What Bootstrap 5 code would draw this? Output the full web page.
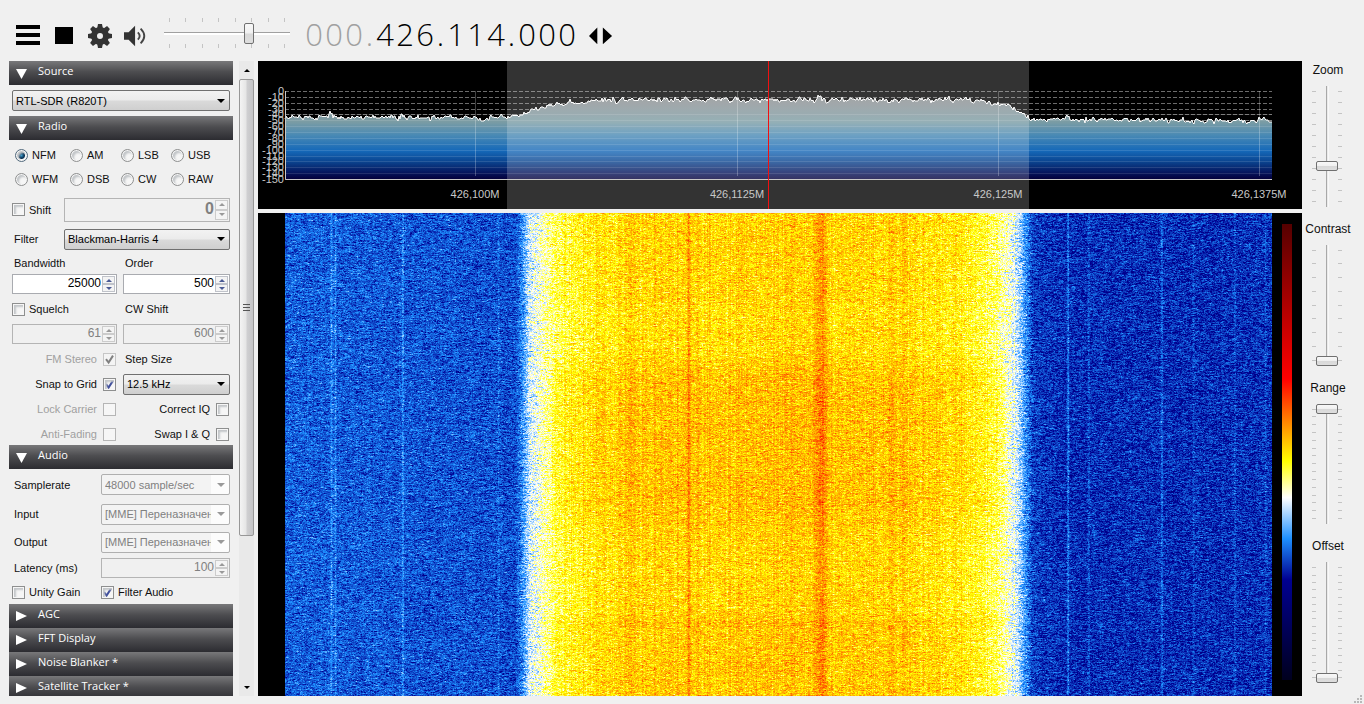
<!DOCTYPE html>
<html lang="en">
<head>
  <meta charset="UTF-8" />
  <meta name="viewport" content="width=device-width, initial-scale=1.0" />
  <title>SDR Receiver</title>
  <link href="https://cdn.jsdelivr.net/npm/bootstrap@5.3.0/dist/css/bootstrap.min.css" rel="stylesheet">
  <style>
    body {
      height: 100vh;
      background: #f0f0f0;
      color: #111;
      font: 11px/16px "Liberation Sans", Arial, sans-serif;
      overflow: hidden;
    }

    /* toolbar */
    .toolbar {
      height: 61px;
      padding: 10px 16px 0;
      flex: none;
    }

    .tools { display: flex; gap: 12px; padding-top: 14px; margin-right: 16px; }
    .tools .tool:first-child svg, .tools .tool:nth-child(2) svg { margin-top: 1px; }

    .tool {
      width: 24px;
      height: 24px;
      padding: 0;
      border: 0;
      background: none;
      line-height: 0;
      display: flex;
    }

    .freq {
      margin-left: 14px;
      font: 300 31px/40px "Open Sans", "Noto Sans", sans-serif;
      color: #000;
    }

    .freq span { display: inline-block; width: 20px; text-align: center; }
    .freq .dot { width: 11px; }
    .freq .off { color: #a0a0a0; }

    /* side panel */
    .work { padding: 0 0 8px 9px; min-height: 0; }
    .side { width: 224px; flex: none; overflow: hidden; }

    .panel-head {
      display: flex;
      align-items: center;
      width: 100%;
      height: 24px;
      flex: none;
      padding: 0 7px 4px;
      border: 0;
      background: linear-gradient(#78787a, #4d4d50 45%, #2c2c31);
      color: #fff;
      font: 11px/16px "Open Sans", "Noto Sans", sans-serif;
      text-align: left;
    }

    .panel-head svg { margin: 4px 11px 0 0; }
    .panel-body { padding: 0 3px; flex: none; }
    .line { display: flex; align-items: center; }
    .h20 { height: 20px; }
    .h22 { height: 22px; }
    .h24 { height: 24px; }
    .h28 { height: 28px; }
    .h31 { height: 31px; }
    .pair { display: grid; grid-template-columns: 105px 1fr; gap: 6px; align-items: center; }
    .modes { display: grid; grid-template-columns: 55px 51px 50px 1fr; padding: 3px 0 3px 3px; }
    .cap { padding-left: 2px; }
    .cap-s { width: 52px; flex: none; }
    .cap-l { width: 89px; flex: none; }
    .box-r { justify-content: end; gap: 6px; padding-right: 1px; }
    .dim { color: #a0a0a0; }

    .form-check-input {
      width: 13px;
      height: 13px;
      margin: 0;
      flex: none;
      border: 1px solid #8e8f8f;
      background-color: #f6f6f6;
      box-shadow: inset 0 0 0 1px #f6f6f6, inset 2px 2px 2px 1px #c3c6c9;
    }

    .form-check-input[type=checkbox] { border-radius: 0; }
    .form-check-input:checked { border-color: #8e8f8f; background-color: #f6f6f6; }

    .form-check-input:checked[type=checkbox] {
      background-image: url("data:image/svg+xml,%3Csvg xmlns='http://www.w3.org/2000/svg' viewBox='0 0 11 11'%3E%3Cpath d='M2 5.2 4.6 8.6 9 1.6' fill='none' stroke='%23404f9c' stroke-width='2'/%3E%3C/svg%3E");
    }

    .form-check-input:checked[type=radio] {
      background-image: radial-gradient(circle, #3c9ac8 0, #12486f 2px, #0c3050 3px, transparent 4px);
      border-color: #51697c;
    }

    .form-check-input:disabled {
      opacity: 1;
      border-color: #b5b5b5;
      box-shadow: none;
      filter: grayscale(1);
    }

    .form-check-input:disabled:checked { background-size: 11px; opacity: .7; }

    .form-select {
      height: 21px;
      padding: 0 18px 0 3px;
      border: 1px solid #707070;
      border-radius: 2px;
      color: #000;
      font: 11px/16px "Liberation Sans", Arial, sans-serif;
      background: url("data:image/svg+xml,%3Csvg xmlns='http://www.w3.org/2000/svg' width='8' height='4'%3E%3Cpath d='M0 0h8L4 4z'/%3E%3C/svg%3E") no-repeat right 4px center / 8px 4px, linear-gradient(#f2f2f2, #ebebeb 48%, #dadada 52%, #cfcfcf);
    }

    .form-select:disabled {
      border-color: #afafaf;
      color: #808080;
      opacity: 1;
      background: url("data:image/svg+xml,%3Csvg xmlns='http://www.w3.org/2000/svg' width='8' height='4'%3E%3Cpath fill='%23999' d='M0 0h8L4 4z'/%3E%3C/svg%3E") no-repeat right 4px center / 8px 4px, linear-gradient(to left, #fcfcfc 18px, #f3f3f3 18px);
    }

    .spin {
      display: flex;
      flex: 1;
      height: 20px;
      border: 1px solid #a9abb0;
      background: #fff;
    }

    .spin.tall { height: 24px; }
    .spin.idle { background: #f0f0f0; border-color: #b4b4b4; }

    .spin input {
      flex: 1;
      width: 0;
      min-width: 0;
      padding: 0 1px 2px;
      border: 0;
      background: none;
      color: #000;
      font: 12px/16px "Liberation Sans", Arial, sans-serif;
      text-align: right;
    }

    .spin input:disabled { color: #808080; }
    .spin.tall input { font-size: 16px; font-weight: 700; }
    .steps { width: 14px; display: flex; flex-direction: column; padding: 1px 1px 1px 0; }

    .steps button {
      flex: 1;
      padding: 0;
      border: 1px solid #c0c3ca;
      background: #f4f4f4;
      line-height: 0;
      color: #4a5a94;
      display: flex;
      align-items: center;
      justify-content: center;
    }

    .idle .steps button { color: #999; border-color: #ccc; }

    /* scrollbar */
    .scroller { width: 15px; margin: 0 4px 0 6px; flex: none; background: #e9e9e9; }
    .scroller button { height: 18px; padding: 0; border: 0; background: none; line-height: 0; }

    .handle {
      height: 72%;
      border: 1px solid #979797;
      border-radius: 2px;
      background: linear-gradient(to right, #f4f4f4, #e6e6e6 45%, #cfcfd1 55%, #c4c4c6);
      display: flex;
      align-items: center;
      justify-content: center;
    }

    /* displays */
    .spectrum { height: 148px; flex: none; background: #000; }
    .spectrum svg { display: block; width: 100%; height: 148px; }
    .spectrum text { font: 11px "Liberation Sans", Arial, sans-serif; fill: #c8c8c8; }
    .fall { padding: 0 10px 0 27px; background: #000; min-height: 0; }
    .fall-view { min-width: 0; min-height: 0; overflow: hidden; }
    .fall canvas { display: block; }

    .legend {
      width: 10px;
      margin: 11px 0 16px 10px;
      background: linear-gradient(#550000, #ff0000 34%, #ffff00 52%, #ffffff 60%, #1e90ff 69%, #000091 78%, #00001e);
    }

    /* sliders */
    .sliders { width: 62px; flex: none; padding-right: 12px; font-size: 12px; }
    .sliders label { margin-top: 1px; padding-left: 2px; }
    .vert { display: flex; justify-content: center; margin: 8px 0 13px; min-height: 0; }

    .ticks { display: flex; justify-content: space-between; }
    .ticks i { background: #c4c4c4; }
    .vert .ticks { flex-direction: column; padding: 5px 0; }
    .vert .ticks i { width: 4px; height: 1px; }
    .horz .ticks { padding: 0 5px; }
    .horz .ticks i { width: 1px; height: 4px; }

    input[type=range] { appearance: none; -webkit-appearance: none; margin: 0; padding: 0; }
    .vert input { writing-mode: vertical-lr; direction: rtl; width: 22px; height: 100%; background: linear-gradient(to right, transparent 10px, #a8a8a8 10px, #a8a8a8 11px, #e4e4e4 11px, #fff 13px, transparent 13px); }
    .horz input { display: block; width: 126px; height: 22px; background: linear-gradient(transparent 10px, #a0a0a0 10px, #a0a0a0 11px, #fff 11px, #fff 13px, transparent 13px); }

    input[type=range]::-webkit-slider-thumb {
      -webkit-appearance: none;
      border: 1px solid #707070;
      border-radius: 2px;
      background: linear-gradient(#f8f8f8, #f0f0f0 48%, #d8d8d8 52%, #dedede);
    }

    .vert input::-webkit-slider-thumb { width: 22px; height: 10px; }
    .horz input::-webkit-slider-thumb { width: 10px; height: 21px; }

    .grip { position: absolute; right: 2px; bottom: 1px; }
  </style>
</head>
<body class="d-flex flex-column">
  <header class="toolbar d-flex align-items-start">
    <div class="tools">
      <button class="tool" aria-label="Menu"><svg width="24" height="20"><path d="M0 0h24v4H0zM0 8h24v4H0zM0 16h24v4H0z"/></svg></button>
      <button class="tool" aria-label="Stop"><svg width="24" height="20"><path d="M3 2h18v17H3z"/></svg></button>
      <button class="tool" aria-label="Settings"><svg width="24" height="24" viewBox="0 0 24 24" id="gear"></svg></button>
      <button class="tool" aria-label="Mute"><svg width="26" height="24" viewBox="0 0 26 24"><path fill="#333" d="M0 8h5l7-7v22l-7-7H0z"/><path d="M15 8q4 4 0 8M18 4q8 8 0 16" fill="none" stroke="#444" stroke-width="2"/></svg></button>
    </div>
    <div class="horz pt-2" data-ticks="8">
      <input type="range" aria-label="Volume" value="69">
    </div>
    <div class="freq pt-1" id="freq" aria-label="Frequency"></div>
    <div class="d-flex pt-3 ms-2 ps-1">
      <button class="tool" aria-label="Tuning style"><svg width="26" height="18" viewBox="0 -1 26 18"><path d="M0 9 9 0v18zM15 0l10 9-10 9z"/></svg></button>
    </div>
  </header>

  <main class="work d-flex flex-fill">
    <aside class="side d-flex flex-column" id="side">
      <button class="panel-head open">Source</button>
      <div class="panel-body">
        <div class="line h31"><select class="form-select" aria-label="Source"><option>RTL-SDR (R820T)</option></select></div>
      </div>

      <button class="panel-head open">Radio</button>
      <div class="panel-body">
        <div class="modes" id="modes"></div>
        <div class="line h31">
          <label class="line gap-1 cap-s"><input class="form-check-input" type="checkbox">Shift</label>
          <div class="spin tall idle"><input aria-label="Shift" value="0" disabled></div>
        </div>
        <div class="line h28">
          <label class="cap cap-s" for="filter">Filter</label>
          <select class="form-select" id="filter"><option>Blackman-Harris 4</option></select>
        </div>
        <div class="pair h20">
          <label class="cap" for="bw">Bandwidth</label>
          <label class="cap" for="order">Order</label>
        </div>
        <div class="pair h22">
          <div class="spin"><input id="bw" value="25000"></div>
          <div class="spin"><input id="order" value="500"></div>
        </div>
        <div class="pair h28">
          <label class="line gap-1"><input class="form-check-input" type="checkbox">Squelch</label>
          <label class="cap" for="cw">CW Shift</label>
        </div>
        <div class="pair h22">
          <div class="spin idle"><input aria-label="Squelch" value="61" disabled></div>
          <div class="spin idle"><input id="cw" value="600" disabled></div>
        </div>
        <div class="pair h28">
          <label class="line box-r dim">FM Stereo<input class="form-check-input" type="checkbox" checked disabled></label>
          <label class="cap" for="step">Step Size</label>
        </div>
        <div class="pair h22">
          <label class="line box-r">Snap to Grid<input class="form-check-input" type="checkbox" checked></label>
          <select class="form-select" id="step"><option>12.5 kHz</option></select>
        </div>
        <div class="pair h28">
          <label class="line box-r dim">Lock Carrier<input class="form-check-input" type="checkbox" disabled></label>
          <label class="line box-r">Correct IQ<input class="form-check-input" type="checkbox"></label>
        </div>
        <div class="pair h22">
          <label class="line box-r dim">Anti-Fading<input class="form-check-input" type="checkbox" disabled></label>
          <label class="line box-r">Swap I &amp; Q<input class="form-check-input" type="checkbox"></label>
        </div>
      </div>

      <button class="panel-head open">Audio</button>
      <div class="panel-body">
        <div class="line h31">
          <label class="cap cap-l" for="rate">Samplerate</label>
          <select class="form-select" id="rate" disabled><option>48000 sample/sec</option></select>
        </div>
        <div class="line h28">
          <label class="cap cap-l" for="ain">Input</label>
          <select class="form-select" id="ain" disabled><option>[MME] Переназначение</option></select>
        </div>
        <div class="line h28">
          <label class="cap cap-l" for="aout">Output</label>
          <select class="form-select" id="aout" disabled><option>[MME] Переназначение</option></select>
        </div>
        <div class="line h24">
          <label class="cap cap-l" for="lat">Latency (ms)</label>
          <div class="spin idle"><input id="lat" value="100" disabled></div>
        </div>
        <div class="line h24">
          <label class="line gap-1 cap-l"><input class="form-check-input" type="checkbox">Unity Gain</label>
          <label class="line gap-1"><input class="form-check-input" type="checkbox" checked>Filter Audio</label>
        </div>
      </div>

      <button class="panel-head">AGC</button>
      <button class="panel-head">FFT Display</button>
      <button class="panel-head">Noise Blanker *</button>
      <button class="panel-head">Satellite Tracker *</button>
    </aside>

    <div class="scroller d-flex flex-column">
      <button aria-label="Scroll up"><svg width="6" height="3"><path d="M0 3h6L3 0z"/></svg></button>
      <div class="handle"><svg width="7" height="8"><path d="M0 0h7v1H0zM0 3h7v1H0zM0 6h7v1H0z" fill="#555"/></svg></div>
      <button class="mt-auto" aria-label="Scroll down"><svg width="6" height="3"><path d="M0 0h6L3 3z"/></svg></button>
    </div>

    <section class="d-flex flex-column flex-fill gap-1" style="min-width: 0">
      <div class="spectrum"><svg id="spectrum"></svg></div>
      <div class="fall d-flex flex-fill">
        <div class="fall-view flex-fill" id="fallView"><canvas id="fall"></canvas></div>
        <div class="legend"></div>
      </div>
    </section>

    <div class="sliders d-flex flex-column text-center" id="sliders"></div>
  </main>

  <svg class="grip" width="8" height="8" fill="#b8b8b8"><path d="M6 0h2v2H6zM3 3h2v2H3zM6 3h2v2H6zM0 6h2v2H0zM3 6h2v2H3zM6 6h2v2H6z"/></svg>

  <script src="https://cdn.jsdelivr.net/npm/bootstrap@5.3.0/dist/js/bootstrap.bundle.min.js"></script>
  <script>
    // small seeded generator so the noise is the same on every redraw
    let seed = 7;
    function rnd() {
      seed = (seed * 1664525 + 1013904223) >>> 0;
      return seed / 4294967296;
    }
    function gauss() {
      return rnd() + rnd() + rnd() + rnd() - 2;
    }

    // piecewise linear lookup in [[x, y], ...]
    function lerp(points, x) {
      for (let i = 1; i < points.length; i++) {
        const [x0, y0] = points[i - 1], [x1, y1] = points[i];
        if (x <= x1) return y0 + (y1 - y0) * (x - x0) / (x1 - x0);
      }
      return points[points.length - 1][1];
    }

    // toolbar
    let teeth = "";
    for (let a = 0; a < 360; a += 45) teeth += `<path d="M9 5 10 0h4l1 5z" transform="rotate(${a} 12 12)"/>`;
    document.getElementById("gear").innerHTML = `<g fill="#333">${teeth}<circle cx="12" cy="12" r="6" fill="none" stroke="#333" stroke-width="6"/></g>`;

    document.getElementById("freq").innerHTML = "000.426.114.000".split("").map((c, i) =>
      `<span class="${c === "." ? "dot" : ""} ${i < 4 ? "off" : ""}">${c}</span>`).join("");

    // side panel
    document.querySelectorAll(".panel-head").forEach(head => {
      const d = head.classList.contains("open") ? "M0 1h11L5.500 11z" : "M0 0v10l11-5z";
      head.insertAdjacentHTML("afterbegin", `<svg width="11" height="11"><path fill="#fff" d="${d}"/></svg>`);
    });

    document.getElementById("modes").innerHTML = ["NFM", "AM", "LSB", "USB", "WFM", "DSB", "CW", "RAW"].map((m, i) =>
      `<label class="line gap-1 h24"><input class="form-check-input" type="radio" name="mode"${i ? "" : " checked"}>${m}</label>`).join("");

    document.querySelectorAll(".spin").forEach(spin => {
      const off = spin.classList.contains("idle") ? "disabled" : "";
      spin.insertAdjacentHTML("beforeend", `<div class="steps">
        <button ${off} aria-label="Up"><svg width="6" height="3"><path fill="currentColor" d="M0 3h6L3 0z"/></svg></button>
        <button ${off} aria-label="Down"><svg width="6" height="3"><path fill="currentColor" d="M0 0h6L3 3z"/></svg></button>
      </div>`);
    });

    // sliders with their tick rows
    const ticks = n => `<div class="ticks">${"<i></i>".repeat(n)}</div>`;
    const horz = document.querySelector(".horz");
    horz.insertAdjacentHTML("afterbegin", ticks(8));
    horz.insertAdjacentHTML("beforeend", ticks(8));

    document.getElementById("sliders").innerHTML = [
      ["Zoom", 11, 32], ["Contrast", 9, 0], ["Range", 15, 100], ["Offset", 16, 0]
    ].map(([name, n, value]) => `<div class="d-flex flex-column" style="flex: 1; min-height: 0">
        <label for="s${name}">${name}</label>
        <div class="vert flex-fill">${ticks(n)}<input type="range" id="s${name}" value="${value}">${ticks(n)}</div>
      </div>`).join("");

    // all x below are fractions of the visible span
    const PASS = [0.225, 0.754];
    const floorLine = [[0, 117], [0.15, 118], [0.23, 118], [0.238, 116], [0.25, 110], [0.27, 106], [0.3, 102], [0.33, 100],
      [0.5, 100], [0.7, 100], [0.715, 103], [0.735, 106], [0.75, 114], [0.756, 119], [1, 121]];
    const spurs = [[0.046, 4], [0.119, 4], [0.218, 3], [0.542, 4], [0.793, 3]];

    function drawSpectrum() {
      const svg = document.getElementById("spectrum");
      const w = svg.clientWidth, left = 27, right = w - 30, top = 30, bottom = 118;
      const span = right - left;
      const px = f => Math.round(left + f * span);
      seed = 7;

      let line = "", drift = 0;
      for (let x = left; x <= right; x++) {
        const f = (x - left) / span;
        drift = drift * 0.4 + gauss() * 2.2;
        let y = lerp(floorLine, f) - 61 + drift;
        spurs.forEach(([c, a]) => { if (Math.abs(f - c) < 0.002) y -= a; });
        line += `${x},${Math.round(y)} `;
      }

      let grid = "", over = "", labels = "";
      for (let i = 0; i <= 15; i++) {
        const y = Math.round(top + (bottom - top) * i / 15);
        grid += `<path d="M${left} ${y}.5H${right}" stroke="#6c6c6c" stroke-dasharray="4 2"/>`;
        if (i > 3) over += `<path d="M${left} ${y}.5H${right}" stroke="#fff" stroke-opacity=".12"/>`;
        labels += `<text x="${left - 1}" y="${y + 4}" text-anchor="end">${-10 * i}</text>`;
      }
      [[0.193, "426,100M"], [0.458, "426,1125M"], [0.722, "426,125M"], [0.987, "426,1375M"]].forEach(([f, t]) => {
        over += `<path d="M${px(f)}.5 ${top}V${bottom - 3}" stroke="#fff" stroke-opacity=".25"/>`;
        labels += `<text x="${px(f)}" y="137" text-anchor="middle">${t}</text>`;
      });

      svg.innerHTML = `
        <defs><linearGradient id="glow" gradientUnits="userSpaceOnUse" x1="0" x2="0" y1="${top}" y2="${bottom}">
          <stop offset="0" stop-color="#8c8c8c"/><stop offset=".15" stop-color="#8a9296"/>
          <stop offset=".35" stop-color="#7b9ca4"/><stop offset=".5" stop-color="#4a8ab4"/>
          <stop offset=".68" stop-color="#1568b8"/><stop offset=".8" stop-color="#0b4590"/>
          <stop offset=".92" stop-color="#061860"/><stop offset="1" stop-color="#03003c"/>
        </linearGradient></defs>
        ${grid}
        <polygon points="${left},${bottom} ${line} ${right},${bottom}" fill="url(#glow)"/>
        ${over}
        <rect x="${px(PASS[0])}" y="0" width="${px(PASS[1]) - px(PASS[0])}" height="148" fill="#fff" fill-opacity=".2"/>
        <polyline points="${line}" fill="none" stroke="#fff"/>
        <path d="M${left}.5 ${top}V${bottom}.5H${right}" fill="none" stroke="#c8c8c8"/>
        ${labels}
        <rect x="${px(0.489)}" y="0" width="1" height="148" fill="#f01010"/>`;
    }

    const palette = [[0, 0, 0, 30], [0.22, 0, 0, 145], [0.31, 30, 144, 255], [0.4, 255, 255, 255],
      [0.48, 255, 255, 0], [0.66, 255, 0, 0], [1, 85, 0, 0]];
    const lut = [0, 1, 2].map(ch => {
      const pts = palette.map(p => [p[0], p[ch + 1]]);
      return Array.from({ length: 1001 }, (_, i) => lerp(pts, i / 1000));
    });

    const level = [[0, 0.28], [0.16, 0.272], [0.233, 0.268], [0.24, 0.31], [0.247, 0.38], [0.262, 0.425], [0.285, 0.468],
      [0.32, 0.495], [0.38, 0.507], [0.52, 0.512], [0.62, 0.505], [0.68, 0.49], [0.71, 0.462], [0.73, 0.425],
      [0.742, 0.38], [0.75, 0.31], [0.757, 0.26], [0.78, 0.248], [1, 0.248]];
    // carriers: centre, width, gain
    const lines = [[0.0465, 0.001, 0.04], [0.0505, 0.001, 0.035], [0.119, 0.001, 0.04], [0.216, 0.001, 0.02],
      [0.409, 0.0015, 0.045], [0.542, 0.006, 0.05], [0.35, 0.003, 0.018], [0.613, 0.002, 0.018], [0.626, 0.003, 0.015],
      [0.793, 0.001, 0.055], [0.814, 0.001, 0.03], [0.888, 0.001, 0.04], [0.92, 0.001, 0.018], [0.962, 0.001, 0.022], [0.993, 0.001, 0.025]];
    // signal strength over time, by fraction of the height
    const fade = [[0, 0], [0.16, 0], [0.2, -0.006], [0.28, -0.008], [0.34, 0.015], [0.6, 0.015], [0.68, 0], [0.82, -0.002],
      [0.84, 0.008], [0.85, 0.02], [0.86, 0.008], [1, 0.01]];

    function drawFall() {
      const view = document.getElementById("fallView"), canvas = document.getElementById("fall");
      const w = canvas.width = view.clientWidth, h = canvas.height = view.clientHeight;
      const ctx = canvas.getContext("2d"), img = ctx.createImageData(w, h);
      seed = 21;

      const cols = [];
      for (let x = 0; x < w; x++) {
        const f = x / w;
        const inside = f > 0.27 && f < 0.74;
        let v = lerp(level, f) + gauss() * (inside ? 0.014 : 0.004);
        lines.forEach(([c, r, a]) => { v += a * Math.exp(-(((f - c) / r) ** 2)); });
        cols.push(v);
      }

      for (let y = 0; y < h; y++) {
        const row = lerp(fade, y / h) + gauss() * 0.003;
        let n = 0;
        for (let x = 0; x < w; x++) {
          const f = x / w;
          const core = f > 0.27 && f < 0.73 ? 1 : 0;
          const quiet = f < 0.237 || f > 0.757;
          n = n * 0.4 + gauss() * (quiet ? 0.037 : 0.044);
          const v = cols[x] + n + core * row;
          const k = Math.max(0, Math.min(1000, Math.round(v * 1000)));
          const o = (y * w + x) * 4;
          img.data[o] = lut[0][k];
          img.data[o + 1] = lut[1][k];
          img.data[o + 2] = lut[2][k];
          img.data[o + 3] = 255;
        }
      }
      ctx.putImageData(img, 0, 0);
    }

    function redraw() {
      drawSpectrum();
      drawFall();
    }
    window.addEventListener("resize", redraw);
    redraw();
  </script>
</body>
</html>
